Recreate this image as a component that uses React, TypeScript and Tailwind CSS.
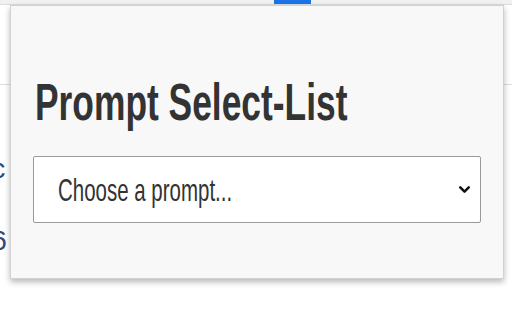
import React from 'react';
import { ChevronDown } from 'lucide-react';

const App: React.FC = () => {
  return (
    <div className="relative w-[512px] h-[320px] overflow-hidden bg-white" style={{ fontFamily: '"Liberation Sans", Arial, sans-serif' }}>
      {/* Page behind the popup */}
      <div className="flex h-[5px] bg-[#f1f1f1] border-b border-[#dcdcdc] pl-[274px]">
        <div className="w-[37px] h-[4px] bg-[#1a73e8]" />
      </div>
      <div className="h-[80px] border-b border-[#dedede]" />
      <div className="flex flex-col gap-[44px] pt-[70px] -ml-[40px] text-[#2b4a7a] text-[28px] leading-none">
        <span>abc</span>
        <span>396</span>
      </div>

      {/* Popup */}
      <div className="absolute left-[10px] top-[5px] w-[494px] h-[274px] bg-[#f8f8f8] border border-[#d2d2d2] shadow-[0_3px_6px_rgba(0,0,0,0.28)] px-[22px] pt-[70px] flex flex-col gap-[28px]">
        <h1 className="text-[52px] leading-[52px] font-bold text-[#333] whitespace-nowrap origin-left scale-x-[0.68] ml-[2px]">
          Prompt Select-List
        </h1>
        <div className="flex items-center justify-between w-[448px] h-[67px] bg-white border border-[#9a9a9a] rounded-[2px] pl-[24px] pr-[7px]">
          <span className="text-[32px] leading-none text-[#333] whitespace-nowrap origin-left scale-x-[0.64] inline-block">Choose a prompt...</span>
          <ChevronDown size={17} strokeWidth={3.6} className="text-[#111]" />
        </div>
      </div>
    </div>
  );
};

export default App;
